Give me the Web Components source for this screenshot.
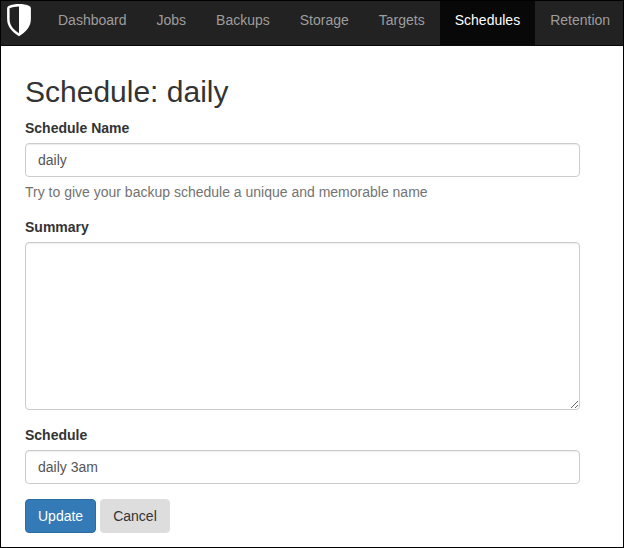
<!DOCTYPE html>
<html lang="en">
<head>
<meta charset="utf-8">
<title>Schedule: daily</title>
<style>
html, body { margin: 0; height: 100%; }
body { font: 14px/20px "Liberation Sans", Arial, sans-serif; color: #333; background: #fff; overflow: hidden; }
</style>
</head>
<body>
<app-window>
  <nav-bar slot="nav">
    <shield-logo></shield-logo>
    <nav-item>Dashboard</nav-item>
    <nav-item>Jobs</nav-item>
    <nav-item>Backups</nav-item>
    <nav-item>Storage</nav-item>
    <nav-item>Targets</nav-item>
    <nav-item active>Schedules</nav-item>
    <nav-item>Retention</nav-item>
  </nav-bar>
  <page-title>Schedule: daily</page-title>
  <form-field label="Schedule Name" value="daily">Try to give your backup schedule a unique and memorable name</form-field>
  <form-field label="Summary" multiline></form-field>
  <form-field label="Schedule" value="daily 3am"></form-field>
  <button-row>
    <action-button primary>Update</action-button>
    <action-button>Cancel</action-button>
  </button-row>
</app-window>
<script>
const define = (name, markup, setup) => customElements.define(name, class extends HTMLElement {
  constructor() {
    super();
    this.attachShadow({ mode: 'open' }).innerHTML = markup;
  }
  connectedCallback() {
    if (setup) setup(this, this.shadowRoot);
  }
});

define('app-window', `
  <style>
    :host { display: flex; flex-direction: column; box-sizing: border-box; height: 100vh; border: 1px solid #000; }
    main { display: block; padding: 29px 43px 0 24px; }
  </style>
  <slot name="nav"></slot>
  <main><slot></slot></main>`);

define('nav-bar', `
  <style>
    :host { display: flex; box-sizing: border-box; height: 45px; background: #222; border-bottom: 1px solid #080808; overflow: hidden; white-space: nowrap; }
  </style>
  <slot></slot>`);

define('shield-logo', `
  <style>
    :host { display: block; flex: none; width: 42px; }
    svg { display: block; margin: 3px 0 0 6px; }
  </style>
  <svg width="24" height="33" viewBox="0 0 24 33">
    <path d="M12 .1C8.500 .1 4.500 .7 1.500 2Q.1 2.700 .1 4.500V15C.1 22.500 4.800 27.800 12 32.200C19.200 27.800 23.900 22.500 23.900 15V4.500Q23.900 2.700 22.500 2C19.500 .7 15.500 .1 12 .1Z" fill="#fff"/>
    <path d="M12 2.500C8.500 2.600 5.500 3.100 2.600 4.300V15C2.600 21.300 6 25.500 12 29.300Z" fill="#222"/>
  </svg>`);

define('nav-item', `
  <style>
    :host { display: block; flex: none; padding: 9px 15px 15px; color: #9d9d9d; }
    :host([active]) { color: #fff; background: #080808; }
  </style>
  <slot></slot>`);

define('page-title', `
  <style>
    :host { display: block; margin-bottom: 10px; }
    h2 { margin: 0; font-size: 30px; font-weight: 500; line-height: 33px; }
  </style>
  <h2><slot></slot></h2>`);

define('form-field', `
  <style>
    :host { display: block; margin-bottom: 15px; }
    label { display: block; margin-bottom: 5px; font-weight: 700; }
    input, textarea {
      display: block; box-sizing: border-box; width: 100%; height: 34px; margin: 0; padding: 6px 12px;
      font: inherit; color: #555; background: #fff; border: 1px solid #ccc; border-radius: 4px;
      box-shadow: inset 0 1px 1px rgba(0,0,0,.075); outline: 0;
    }
    textarea { height: 168px; resize: both; overflow: auto; }
    .help { display: block; margin-top: 5px; color: #737373; }
    .help[hidden] { display: none; }
  </style>
  <label for="control"></label>
  <div class="control"></div>
  <span class="help"><slot></slot></span>`,
  (host, root) => {
    root.querySelector('label').textContent = host.getAttribute('label');
    const control = document.createElement(host.hasAttribute('multiline') ? 'textarea' : 'input');
    control.id = 'control';
    control.value = host.getAttribute('value') || '';
    root.querySelector('.control').replaceChildren(control);
    root.querySelector('.help').hidden = !host.textContent.trim();
  });

define('button-row', `
  <style>:host { display: flex; gap: 4px; }</style>
  <slot></slot>`);

define('action-button', `
  <style>
    :host { display: block; }
    button { display: block; margin: 0; padding: 6px 12px; font: inherit; color: #333; background: #ddd; border: 1px solid #ddd; border-radius: 4px; }
    :host([primary]) button { color: #fff; background: #337ab7; border-color: #2e6da4; }
  </style>
  <button type="button"><slot></slot></button>`);
</script>
</body>
</html>
